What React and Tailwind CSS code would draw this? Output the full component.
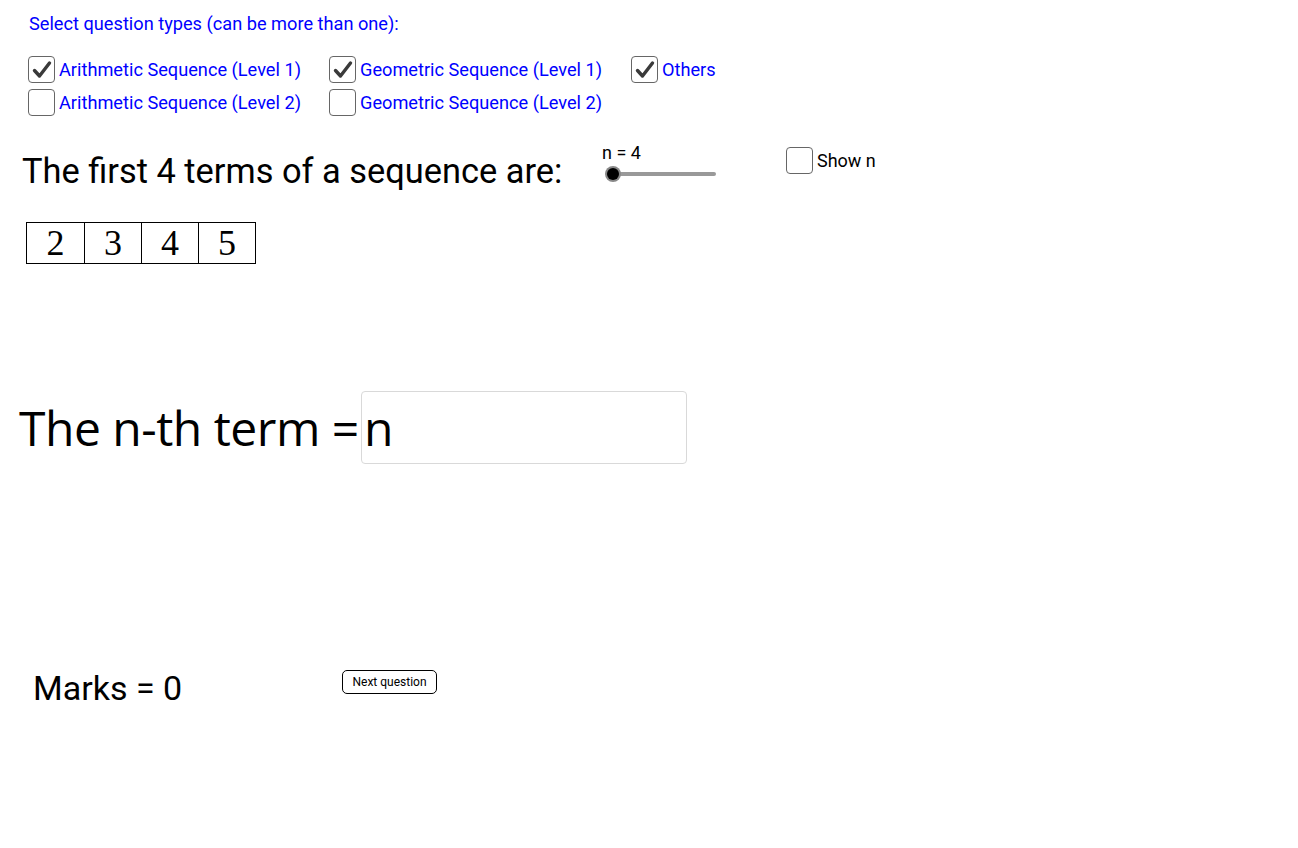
import React, { useState } from 'react';

const QUESTION_TYPES = [
  [
    { label: 'Arithmetic Sequence (Level 1)', checked: true },
    { label: 'Geometric Sequence (Level 1)', checked: true },
    { label: 'Others', checked: true },
  ],
  [
    { label: 'Arithmetic Sequence (Level 2)', checked: false },
    { label: 'Geometric Sequence (Level 2)', checked: false },
  ],
];

const TERMS = [2, 3, 4, 5];

function Box({ checked, onClick }) {
  return (
    <button
      onClick={onClick}
      className="w-[27px] h-[27px] shrink-0 rounded-[4px] border-[1.5px] border-[#666] bg-white flex items-center justify-center"
    >
      {checked && (
        <svg width="22" height="22" viewBox="0 0 22 22">
          <path d="M3.5 11.5 L8.5 17 L18.5 4" fill="none" stroke="#3a3a3a" strokeWidth="3.4" strokeLinecap="round" strokeLinejoin="round" />
        </svg>
      )}
    </button>
  );
}

function Check({ label, checked, onClick, className = '' }) {
  return (
    <div className={`flex items-center gap-[4px] ${className}`}>
      <Box checked={checked} onClick={onClick} />
      <span>{label}</span>
    </div>
  );
}

export default function App() {
  const [types, setTypes] = useState(QUESTION_TYPES);
  const [showN, setShowN] = useState(false);
  const [answer, setAnswer] = useState('n');

  const toggle = (r, c) => {
    setTypes(types.map((row, i) => row.map((t, j) => (i === r && j === c ? { ...t, checked: !t.checked } : t))));
  };

  const colWidths = ['w-[301px]', 'w-[302px]', 'w-[120px]'];

  return (
    <div className="w-[1298px] h-[848px] bg-white relative overflow-hidden font-['Roboto',sans-serif] text-black">
      {/* Question type selection */}
      <div className="pt-[13px] pl-[29px] text-[18.2px] leading-[22px] text-[#0000ff]">
        Select question types (can be more than one):
      </div>

      <div className="mt-[21px] pl-[28px] flex flex-col gap-[6px] text-[18.2px] text-[#0000ff]">
        {types.map((row, i) => (
          <div key={i} className="flex h-[27px]">
            {row.map((t, j) => (
              <Check key={j} label={t.label} checked={t.checked} onClick={() => toggle(i, j)} className={colWidths[j]} />
            ))}
          </div>
        ))}
      </div>

      {/* Sequence prompt */}
      <div className="mt-[29px] flex h-[50px]">
        <div className="pl-[22px] w-[602px] pt-[6px] text-[34.4px] leading-[40px]">
          The first 4 terms of a sequence are:
        </div>
        <div className="w-[184px] flex flex-col">
          <span className="text-[18px] leading-[20px] -mt-[2px]">n = 4</span>
          <div className="relative mt-[3px] w-[116px] h-[16px] flex items-center">
            <div className="ml-[10px] h-[4px] w-[104px] rounded-full bg-[#999]" />
            <div className="absolute left-[3px] top-[0px] w-[16px] h-[16px] rounded-full bg-[#888] flex items-center justify-center">
              <div className="w-[12px] h-[12px] rounded-full bg-black" />
            </div>
          </div>
        </div>
        <Check label="Show n" checked={showN} onClick={() => setShowN(!showN)} className="text-[18px] items-center h-[27px] mt-[2px]" />
      </div>

      <div className="mt-[27px] ml-[26px] flex w-fit border-[1.5px] border-black font-['Liberation_Serif',serif] text-[36px] leading-[40px]">
        {TERMS.map((t, i) => (
          <div key={t} className={`w-[57px] h-[40px] flex items-center justify-center ${i > 0 ? 'border-l-[1.5px] border-black' : ''}`}>
            {t}
          </div>
        ))}
      </div>

      {/* Answer */}
      <div className="mt-[127px] ml-[19px] flex items-center h-[73px] font-['Open_Sans',sans-serif]">
        <span className="w-[342px] shrink-0 whitespace-nowrap text-[48px] leading-[56px] tracking-[-0.5px]">The n-th term =</span>
        <input
          value={answer}
          onChange={(e) => setAnswer(e.target.value)}
          className="w-[326px] h-[73px] rounded-[4px] border border-[#d9d9d9] px-[2px] text-[48px] outline-none font-['Open_Sans',sans-serif]"
        />
      </div>

      <div className="mt-[206px] flex items-start h-[24px]">
        <span className="ml-[33px] w-[309px] mt-[-2px] text-[34px] leading-[40px]">Marks = 0</span>
        <button className="w-[95px] h-[24px] rounded-[5px] border border-black text-[12px] leading-[14px] bg-white">
          Next question
        </button>
      </div>
    </div>
  );
}
